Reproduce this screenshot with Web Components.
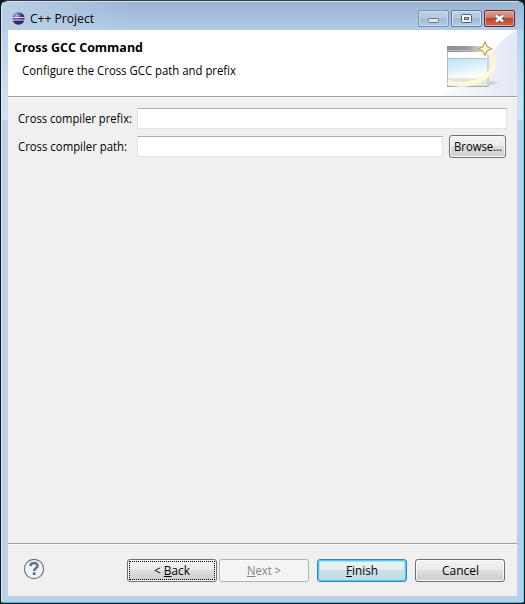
<!DOCTYPE html>
<html lang="en"><head><meta charset="utf-8"><title>C++ Project</title>
<style>html,body{margin:0;width:525px;height:604px;overflow:hidden;background:#10151b;font:12px "Open Sans","Noto Sans",sans-serif;color:#000}</style></head>
<body>
<wizard-window>
 <title-bar slot="title"><fit-text width="64">C++ Project</fit-text></title-bar>
 <wizard-header slot="header"><fit-text slot="title" width="129">Cross GCC Command</fit-text><fit-text slot="text" width="214">Configure the Cross GCC path and prefix</fit-text></wizard-header>
 <form-row><fit-text slot="label" width="114">Cross compiler prefix:</fit-text></form-row>
 <form-row><fit-text slot="label" width="109">Cross compiler path:</fit-text><push-button slot="action" class="browse"><fit-text width="48">Browse...</fit-text></push-button></form-row>
 <wizard-footer slot="footer">
  <push-button focused><fit-text width="36">&lt; <u>B</u>ack</fit-text></push-button>
  <push-button disabled><fit-text width="34"><u>N</u>ext &gt;</fit-text></push-button>
  <push-button primary><fit-text width="32"><u>F</u>inish</fit-text></push-button>
  <push-button><fit-text width="37">Cancel</fit-text></push-button>
 </wizard-footer>
</wizard-window>
<script>
const define=(name,html,connected)=>customElements.define(name,class extends HTMLElement{
 constructor(){super();this.attachShadow({mode:'open'}).innerHTML=html}
 connectedCallback(){connected&&connected(this)}
});
define('wizard-window',`<style>
:host{display:flex;flex-direction:column;box-sizing:border-box;width:523px;height:603px;margin:0 0 0 1px;padding:0 6px 6px;border:1px solid #dcebf7;border-top-color:#343c48;border-right-color:#55d7ef;border-bottom-color:#38bfdc;border-radius:7px 7px 2px 2px;
background:linear-gradient(#d9e6f3,#c7d9ea) 0 0/100% 1px no-repeat,linear-gradient(90deg,#b9cfe6,transparent 25%) 0 0/100% 29px no-repeat,linear-gradient(#9bb4d0,#a7c1de 60%,#b2cce8) 0 0/100% 29px no-repeat,linear-gradient(#bad2eb,#d0e3f4) 0 29px/100% 90px no-repeat,#b9d0ea}
.client{flex:1;display:flex;flex-direction:column;background:#f0f0f0;min-height:0}
.form{flex:1;padding:11px 10px 0 10px;display:flex;flex-direction:column;gap:7px}
</style><slot name="title"></slot><div class="client"><slot name="header"></slot><div class="form"><slot></slot></div><slot name="footer"></slot></div>`);
define('title-bar',`<style>
:host{display:flex;height:29px;box-sizing:border-box;padding:9px 2px 0 4px}
.logo{width:13px;height:13px;margin:2px 5px 0 0}.name{flex:1;line-height:17px}
.controls{display:flex;gap:2px}.control{width:31px;height:18px}.control svg{display:block}
</style><svg class="logo" viewBox="0 0 13 13"><defs><radialGradient id="g" cx=".35" cy=".25"><stop stop-color="#c0badf"/><stop offset=".5" stop-color="#6c60a3"/><stop offset="1" stop-color="#342960"/></radialGradient></defs><circle cx="6.5" cy="6.5" r="6.2" fill="url(#g)"/><path d="M2 1.8A6.2 6.2 0 0 0 2 11.2 9 9 0 0 1 2 1.8" fill="#d8b8a8"/><path d="M0 5.5H13M0 8H13" stroke="#d8dcf4"/></svg>
<div class="name"><slot></slot></div><div class="controls">
<svg class="control" viewBox="0 0 31 18"><defs><linearGradient id="b" x2="0" y2="1"><stop stop-color="#bdd0e5"/><stop offset=".48" stop-color="#b4cae3"/><stop offset=".5" stop-color="#9fbad7"/><stop offset="1" stop-color="#b3cde8"/></linearGradient></defs><rect x=".5" y=".5" width="30" height="16" rx="1.5" fill="url(#b)" stroke="#7c93ae"/><rect x="1.5" y="1.5" width="28" height="14" rx="1" fill="none" stroke="#d4e3f2" stroke-opacity=".7"/><rect x="10.5" y="8.5" width="10" height="4" rx="1" fill="#e6e6e4" stroke="#6f7780"/></svg>
<svg class="control" viewBox="0 0 31 18"><rect x=".5" y=".5" width="30" height="16" rx="1.5" fill="url(#b)" stroke="#607b9a"/><rect x="1.5" y="1.5" width="28" height="14" rx="1" fill="none" stroke="#d9e6f4"/><rect x="10.5" y="4.5" width="10" height="8" rx="1" fill="#f6f6f6" stroke="#555d68"/><rect x="13.5" y="7.5" width="4" height="2" fill="#b5c9df" stroke="#555d68"/></svg>
<svg class="control" viewBox="0 0 31 18"><defs><linearGradient id="r" x2="0" y2="1"><stop stop-color="#dda398"/><stop offset=".47" stop-color="#ce786b"/><stop offset=".5" stop-color="#b94131"/><stop offset="1" stop-color="#cf7252"/></linearGradient></defs><rect x=".5" y=".5" width="30" height="16" rx="1.5" fill="url(#r)" stroke="#632b2b"/><rect x="1.5" y="1.5" width="28" height="14" rx="1" fill="none" stroke="#e6b3a8" stroke-opacity=".8"/><path d="M12 5.5L19 11.5M19 5.5L12 11.5" stroke="#58505b" stroke-width="4.2"/><path d="M12 5.5L19 11.5M19 5.5L12 11.5" stroke="#fff" stroke-width="2.5"/></svg></div>`);
define('wizard-header',`<style>
:host{display:flex;height:67px;box-sizing:border-box;border-bottom:1px solid #a0a0a0;background:#fff;box-shadow:0 1px #fff}
.copy{flex:1;padding:9px 0 0 6px}.title{font-weight:700;line-height:17px}.text{padding:6px 0 0 8px;line-height:17px}
svg{width:89px;height:66px}
</style><div class="copy"><div class="title"><slot name="title"></slot></div><div class="text"><slot name="text"></slot></div></div>
<svg viewBox="0 0 89 66"><defs><linearGradient id="bg"><stop stop-color="#fff"/><stop offset="1" stop-color="#e4e8f5"/></linearGradient><linearGradient id="sky" x2=".4" y2="1"><stop stop-color="#b8e1f4"/><stop offset="1" stop-color="#fafdff"/></linearGradient><linearGradient id="bar"><stop stop-color="#8d8d8d"/><stop offset=".6" stop-color="#9c9c9c"/><stop offset="1" stop-color="#e2dfd5"/></linearGradient><linearGradient id="arc" x1="0" x2="1" y1="1" y2=".4"><stop stop-color="#fffce4" stop-opacity=".8"/><stop offset=".5" stop-color="#fffadb"/><stop offset="1" stop-color="#fcf7d7"/></linearGradient><radialGradient id="shade"><stop stop-color="#b7bbc6"/><stop offset="1" stop-color="#e7eaf6" stop-opacity="0"/></radialGradient></defs>
<path d="M0 66Q35 61 56 35Q70 10 89 0V66Z" fill="url(#bg)"/>
<ellipse cx="62" cy="53" rx="13" ry="4" fill="url(#shade)"/><path d="M19 16H60V57H19Z" fill="#fff"/><path d="M19 16H54V22H19Z" fill="url(#bar)"/><path d="M19 20.5H52" stroke="#bcbcbc"/><path d="M20 28H59V48H20Z" fill="url(#sky)"/><path d="M19.5 22V56M20 28.5H58" stroke="#b4bec1"/><path d="M60 24V56" stroke="#d0d3d5" stroke-width="2"/><path d="M20 48H59V56H20Z" fill="#e6e5db"/><path d="M19 56.5H61" stroke="#aaaaa0"/>
<path d="M62 23C71 33 63 47 47 52Q33 57 20 52" fill="none" stroke="url(#arc)" stroke-width="5"/>
<path d="M57 12L59.2 16.8L63.7 18.8L59.2 21L57 25.5L54.8 21L50.3 18.8L54.8 16.8Z" fill="#fffbdc" stroke="#c5a151" stroke-width="1.2"/></svg>`);
define('form-row',`<style>
:host{display:flex;align-items:center;height:21px}.label{width:119px;line-height:17px}.field{flex:1;box-sizing:border-box;height:21px;background:#fff;border:1px solid #e2e3ea;border-top-color:#abadb3;border-right-color:#dbdfe6;border-radius:1px}
::slotted([slot=action]){margin-left:6px}
</style><div class="label"><slot name="label"></slot></div><div class="field"></div><slot name="action"></slot>`);
define('push-button',`<style>
:host{display:flex;align-items:center;justify-content:center;position:relative;box-sizing:border-box;width:90px;height:23px;border:1px solid #707070;border-radius:3px;background:linear-gradient(#f2f2f2,#ebebeb 49%,#dddddd 50%,#cfcfcf);box-shadow:inset 0 0 0 1px #fafafa;line-height:17px;white-space:nowrap}
:host(.browse){width:57px;height:23px;margin-right:1px}
:host([disabled]){color:#838383;border-color:#adb2b5;background:#f4f4f4;box-shadow:inset 0 0 0 1px #fafafa}
:host([primary]){border-color:#3c7fb1;background:linear-gradient(#edf4f7,#e2edf2 49%,#cbdfe5 50%,#c4dce3);box-shadow:inset 0 0 0 1px #48d0f5,inset 0 0 0 2px #a4e2f3}
:host([focused])::after{content:"";position:absolute;inset:1px;border:1px dotted #000}
</style><slot></slot>`);
define('wizard-footer',`<style>
:host{display:flex;height:53px;box-sizing:border-box;border-top:1px solid #a0a0a0;box-shadow:inset 0 1px #fafafa;padding:15px 12px 0 15px}
svg{width:22px;height:22px;margin:-1px 82px 0 0}.buttons{display:flex}
::slotted(*){margin-right:8px}::slotted([focused]){margin-right:2px}::slotted(:last-child){margin-right:0}
</style><svg viewBox="0 0 22 22"><circle cx="11" cy="11" r="9.6" fill="#f1f4f8" stroke="#65718d" stroke-width="1.1"/><path d="M7.5 8.1C7.7 3.9 14.8 4.1 14.5 8C14.3 10.4 11.2 10.3 11.2 13" fill="none" stroke="#65718f" stroke-width="2.6"/><rect x="9.8" y="14.3" width="2.8" height="2.7" rx=".5" fill="#65718f"/></svg><div class="buttons"><slot></slot></div>`);
// Condenses or widens a label to its set width.
define('fit-text',`<style>:host{display:inline-block;white-space:pre;vertical-align:top}span{display:inline-block;transform-origin:0 50%;vertical-align:top}</style><span><slot></slot></span>`,el=>{
 const span=el.shadowRoot.querySelector('span'),w=span.getBoundingClientRect().width,t=+el.getAttribute('width');
 span.style.transform='scaleX('+t/w+')';el.style.width=t+'px';
});
</script></body></html>
